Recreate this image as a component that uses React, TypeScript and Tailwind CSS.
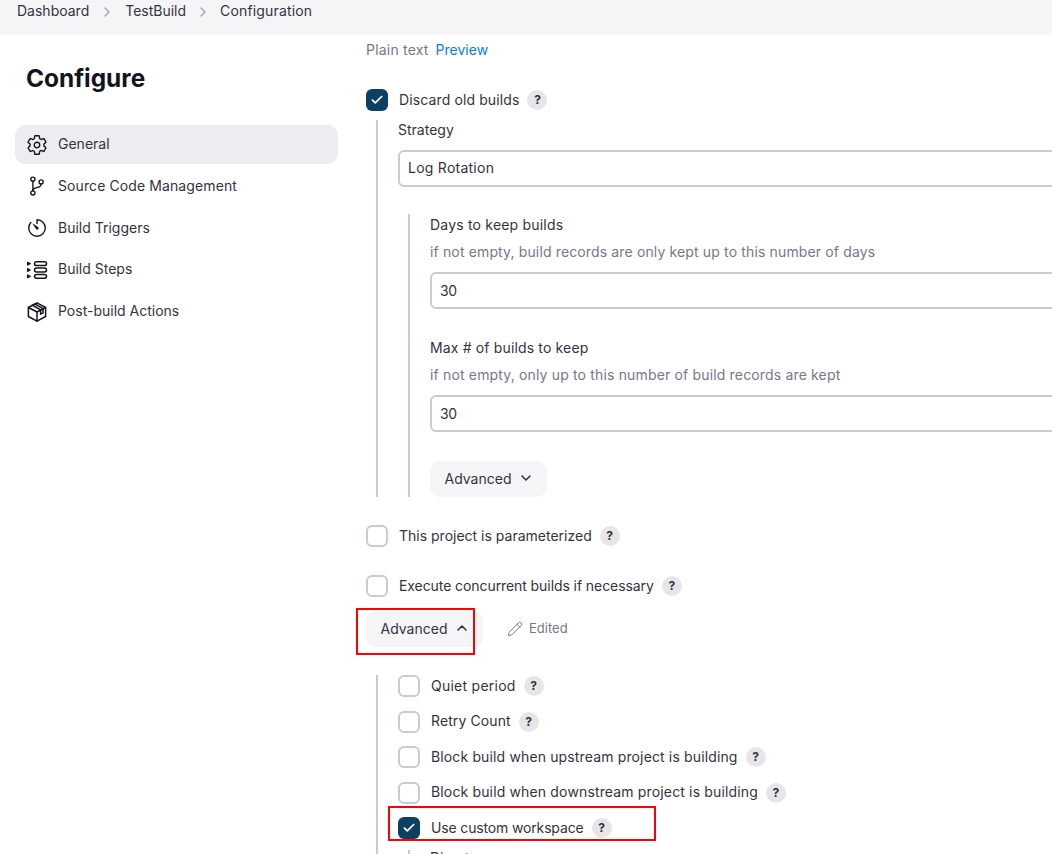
import { ChevronDown, ChevronUp, ChevronRight, Pencil, Check } from "lucide-react";
import { IoSettingsOutline, IoGitBranchOutline, IoTimerOutline } from "react-icons/io5";

function StepsIcon() {
  return (
    <svg viewBox="0 0 22 22" width="22" height="22" fill="none" stroke="currentColor" strokeWidth="1.5" aria-hidden>
      <rect x="8.5" y="2.8" width="12" height="3.8" rx="1.9" />
      <rect x="8.5" y="9.1" width="12" height="3.8" rx="1.9" />
      <rect x="8.5" y="15.4" width="12" height="3.8" rx="1.9" />
      <path d="M1.6 3.4l2.6 1.3L1.6 6zM1.6 9.7l2.6 1.3-2.6 1.3zM1.6 16l2.6 1.3-2.6 1.3z" strokeLinejoin="round" strokeWidth="1.3" />
    </svg>
  );
}

function PackageIcon() {
  return (
    <svg viewBox="0 0 22 22" width="22" height="22" fill="none" stroke="currentColor" strokeWidth="1.5" strokeLinejoin="round" strokeLinecap="round" aria-hidden>
      <path d="M11 1.8l8.6 4.7v9L11 20.2l-8.6-4.7v-9z" />
      <path d="M2.4 6.5L11 11l8.6-4.5M11 11v9.2" />
      <path d="M6.2 4L14.6 8.8v4.4l2.4-1.3V7.6L8.8 2.9" />
    </svg>
  );
}

const navItems = [
  { label: "General", icon: <IoSettingsOutline size={22} />, active: true },
  { label: "Source Code Management", icon: <IoGitBranchOutline size={22} />, cls: "tracking-[0.1px]" },
  { label: "Build Triggers", icon: <IoTimerOutline size={22} /> },
  { label: "Build Steps", icon: <StepsIcon /> },
  { label: "Post-build Actions", icon: <PackageIcon /> },
];

function Help() {
  return (
    <span className="grid size-5 shrink-0 place-items-center rounded-full bg-[#e6e6e9] text-[12px] font-bold text-[#33333f]">?</span>
  );
}

function Checkbox({ label, checked, cls }: { label: string; checked?: boolean; cls?: string }) {
  return (
    <div className="flex h-[22px] items-center">
      {checked ? (
        <span className="grid size-[22px] shrink-0 place-items-center rounded-[6px] bg-[#0b4063] text-white">
          <Check size={14} strokeWidth={3} />
        </span>
      ) : (
        <span className="size-[22px] shrink-0 rounded-[6px] border-2 border-[#c3ced3] bg-white" />
      )}
      <span className={`ml-[11px] mr-2 whitespace-nowrap pb-[2px] text-[#33333f] ${cls ?? ""}`}>{label}</span>
      <Help />
    </div>
  );
}

function AdvancedButton({ open }: { open?: boolean }) {
  return (
    <button className="flex h-[36px] w-[117px] items-center justify-center gap-[7px] rounded-[10px] bg-[#f5f5f8] pb-[2px] pl-[2px] text-[#33333f]">
      Advanced
      {open ? <ChevronUp size={16} strokeWidth={2.4} /> : <ChevronDown size={16} strokeWidth={2.4} />}
    </button>
  );
}

function Field({ label, hint, value, labelCls, hintCls }: { label: string; hint: string; value: string; labelCls: string; hintCls: string }) {
  return (
    <div>
      <div className={`h-[22px] leading-[22px] text-[#33333f] ${labelCls}`}>{label}</div>
      <div className={`mt-[5px] h-[22px] leading-[22px] text-[#77778c] ${hintCls}`}>{hint}</div>
      <div className="mt-[9px] flex h-[37px] w-[700px] items-center rounded-[6px] border-2 border-[#c3ced3] bg-white px-2 tracking-[-0.5px] text-[#33333f]">{value}</div>
    </div>
  );
}

export default function App() {
  return (
    <div className="relative h-[854px] w-[1052px] overflow-hidden bg-white font-['Inter',sans-serif] text-[14px] text-[#14141f]">
      {/* breadcrumb */}
      <div className="flex h-[35px] items-start bg-[#f5f5f8] pl-[17px] pt-[1px] leading-[20px] text-[#33333f]">
        <span>Dashboard</span>
        <ChevronRight size={16} className="mx-[10px] mt-[3px] text-[#a5a5b1]" />
        <span>TestBuild</span>
        <ChevronRight size={16} className="mx-[9px] mt-[3px] text-[#a5a5b1]" />
        <span className="tracking-[0.15px]">Configuration</span>
      </div>

      <div className="flex">
        {/* sidebar */}
        <aside className="w-[366px] shrink-0 pl-[15px]">
          <h1 className="mt-[26px] pl-[11px] text-[24.4px] font-bold leading-[34px] text-[#14141f]">Configure</h1>
          <nav className="mt-[30px] flex w-[323px] flex-col gap-[2.75px]">
            {navItems.map((item) => (
              <div
                key={item.label}
                className={item.active ? "flex h-[39px] items-center gap-[10px] rounded-[10px] bg-[#ececf1] pl-[11px] text-[#33333f]" : "flex h-[39px] items-center gap-[10px] rounded-[10px] pl-[11px] text-[#33333f]"}
              >
                <span className="text-[#14141f]">{item.icon}</span>
                <span className={`pb-[2px] ${item.cls ?? ""}`}>{item.label}</span>
              </div>
            ))}
          </nav>
        </aside>

        {/* form */}
        <main className="min-w-0 flex-1">
          <div className="mt-[4px] h-[22px] leading-[22px]">
            <span className="tracking-[0.2px] text-[#77778c]">Plain text</span>
            <span className="ml-[7px] text-[#0b7de9]">Preview</span>
          </div>

          <div className="mt-[28px]">
            <Checkbox label="Discard old builds" checked cls="tracking-[0.12px]" />
          </div>

          <div className="ml-[10px] mt-[9px] w-[800px] border-l-2 border-[#c3ced3] pl-5">
            <div className="h-[20px] leading-[20px] text-[#33333f]">Strategy</div>
            <div className="mt-[10px] flex h-[37px] w-[700px] items-center rounded-[6px] border-2 border-[#c3ced3] bg-white px-2 pb-[2px] tracking-[0.25px] text-[#33333f]">Log Rotation</div>

            <div className="ml-[10px] mt-[27px] border-l-2 border-[#c3ced3] pl-5">
              <Field label="Days to keep builds" labelCls="tracking-[0.2px]" hint="if not empty, build records are only kept up to this number of days" hintCls="tracking-[0.14px]" value="30" />
              <div className="mt-[28px]">
                <Field label="Max # of builds to keep" labelCls="tracking-[0.15px]" hint="if not empty, only up to this number of build records are kept" hintCls="tracking-[0.16px]" value="30" />
              </div>
              <div className="mt-[29px]">
                <AdvancedButton />
              </div>
            </div>
          </div>

          <div className="mt-[28px]">
            <Checkbox label="This project is parameterized" />
          </div>
          <div className="mt-[28px]">
            <Checkbox label="Execute concurrent builds if necessary" cls="tracking-[-0.08px]" />
          </div>

          <div className="mt-[14px] flex items-center">
            <AdvancedButton open />
            <Pencil size={16} strokeWidth={1.5} className="ml-6 text-[#77778c]" />
            <span className="ml-[6px] text-[13px] text-[#77778c]">Edited</span>
          </div>

          <div className="ml-[10px] mt-[28px] h-[200px] border-l-2 border-[#c3ced3] pl-5">
            <div className="flex flex-col gap-[13.5px] pt-[0.25px]">
              <Checkbox label="Quiet period" cls="tracking-[0.25px]" />
              <Checkbox label="Retry Count" cls="tracking-[0.1px]" />
              <Checkbox label="Block build when upstream project is building" cls="tracking-[0.14px]" />
              <Checkbox label="Block build when downstream project is building" cls="tracking-[0.15px]" />
              <Checkbox label="Use custom workspace" checked cls="tracking-[-0.15px]" />
            </div>
            <div className="ml-[10px] mt-[11px] border-l-2 border-[#c3ced3] pl-5 leading-[15px] text-[#33333f]">Directory</div>
          </div>
        </main>
      </div>

      {/* annotation boxes */}
      <div className="absolute left-[356px] top-[608px] h-[47px] w-[119px] border-2 border-[#ff0000]" />
      <div className="absolute left-[388px] top-[806px] h-[35px] w-[268px] border-2 border-[#ff0000]" />
    </div>
  );
}
